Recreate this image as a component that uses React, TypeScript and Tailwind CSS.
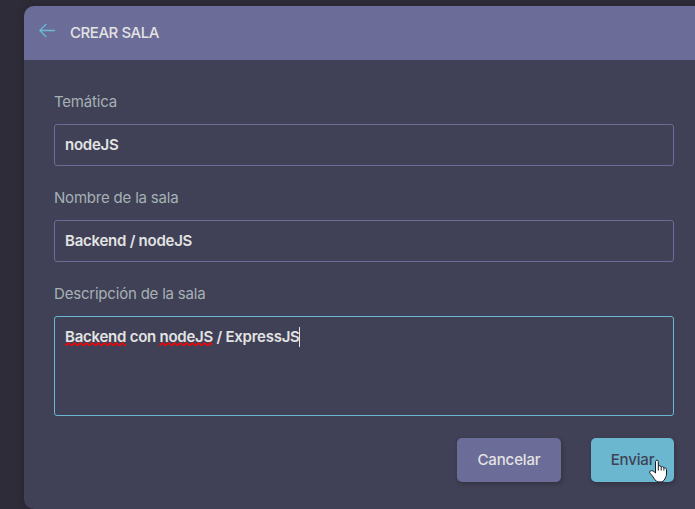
import type { ReactNode } from "react";

function Misspelled({ id, children }: { id: string; children: ReactNode }) {
  return (
    <span className="relative">
      {children}
      <svg className="absolute top-[15px] left-0 h-1 w-full" aria-hidden="true">
        <defs>
          <pattern id={id} width="6" height="4" patternUnits="userSpaceOnUse">
            <path d="M-1 2.2 0 3.2H1L3 1.2H4L6 3.2H7" fill="none" stroke="#ff0000" strokeWidth="1.4" />
          </pattern>
        </defs>
        <rect width="100%" height="4" fill={`url(#${id})`} />
      </svg>
    </span>
  );
}

function Label({ children }: { children: ReactNode }) {
  return <span className="h-5 text-[15px] leading-5 tracking-[-0.2px] text-[#a6b1b5]">{children}</span>;
}

function PointerCursor() {
  return (
    <svg className="absolute top-[21px] left-[58px] h-6 w-[18px]" viewBox="0 0 18 24">
      <path
        d="M6.5 14V2.5C6.5.7 9.3.7 9.3 2.5V7.3C9.7 6.5 12 6.5 12.2 8 12.8 7.2 14.7 7.4 14.9 9 16 8.4 17.5 9.2 17.5 10.7V15C17.5 17 16.5 18.5 15.8 20 14.9 22 13.5 23 11 23 7.5 23 6.2 21.5 5 19.3 4 17.4 2.7 16.2 1 14.2.3 13.2.8 11.9 2.2 11.7 3.8 11.5 5.2 12.7 6.5 14Z"
        fill="#fff"
        stroke="#171d24"
        strokeWidth="1"
      />
      <path d="M9.3 7.3v4.2M12.2 8v3.5M14.9 9v2.5" stroke="#171d24" strokeWidth="1" />
    </svg>
  );
}

export default function App() {
  return (
    <div className="h-[509px] w-[695px] overflow-hidden bg-[#2d2c38] pt-1.5 pl-6 font-['Inter','DM_Sans',sans-serif]">
      <main className="h-[503px] w-[700px] overflow-hidden rounded-[10px] bg-[#404156] shadow-[0_0_8px_rgba(0,0,0,0.2)]">
        <header className="flex h-[54px] items-center bg-[#6c6c98] pl-[15px]">
          <svg className="-mt-[6px] h-4 w-4" viewBox="0 0 16 16" fill="none" stroke="#68bbd3" strokeWidth="1.3">
            <path d="M16 8.5H.8M7.2 2 .8 8.5l6.4 6.5" />
          </svg>
          <h1 className="ml-[15px] text-[15px] leading-5 font-medium tracking-[-0.45px] text-[#e3e3e3]">CREAR SALA</h1>
        </header>
        <form className="flex w-[680px] flex-col px-[30px] pt-8 pb-[27px] text-[15px] font-semibold tracking-[-0.25px] text-[#e3e3e3]">
          <div className="flex flex-col gap-3">
            <span className="flex font-normal"><Label>Temática</Label></span>
            <div className="flex h-[42px] items-center rounded-[3px] border border-[#6c6c98] px-2.5">nodeJS</div>
          </div>
          <div className="mt-[22px] flex flex-col gap-3">
            <span className="flex font-normal"><Label>Nombre de la sala</Label></span>
            <div className="flex h-[42px] items-center rounded-[3px] border border-[#6c6c98] px-2.5">Backend / nodeJS</div>
          </div>
          <div className="mt-[22px] flex flex-col gap-3">
            <span className="flex font-normal"><Label>Descripción de la sala</Label></span>
            <div className="flex h-[100px] items-start rounded-[3px] border border-[#6ab9d0] px-2.5 pt-2.5 leading-5">
              <span>
                <Misspelled id="wave-backend">Backend</Misspelled> con <Misspelled id="wave-node">nodeJS</Misspelled> / ExpressJS
              </span>
              <i className="-ml-px h-5 w-px bg-[#e3e3e3]" />
            </div>
          </div>
          <div className="mt-[22px] flex justify-end gap-[30px] font-medium tracking-[-0.14px]">
            <button type="button" className="h-11 w-[104px] rounded-[5px] bg-[#6c6c98] shadow-[1px_2px_4px_rgba(0,0,0,0.25)]">Cancelar</button>
            <button type="button" className="relative h-11 w-[83px] rounded-[5px] bg-[#6bb7cf] text-[#404156] shadow-[1px_2px_4px_rgba(0,0,0,0.25)]">
              Enviar
              <PointerCursor />
            </button>
          </div>
        </form>
      </main>
    </div>
  );
}
